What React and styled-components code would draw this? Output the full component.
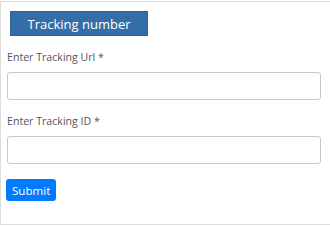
import React from "react";
import styled, { createGlobalStyle } from "styled-components";

const Global = createGlobalStyle`
  body {
    margin: 0;
    background: #fff;
    font-family: "Open Sans", "Liberation Sans", sans-serif;
  }
`;

const Panel = styled.div`
  margin-top: 1px;
  width: 100%;
  height: 224px;
  border: 1px solid #dcdcdc;
  border-right: none;
  padding: 9px 0 0 6px;
  box-sizing: border-box;
`;

const Heading = styled.div`
  margin-left: 3px;
  width: 138px;
  height: 25px;
  background: #336ea7;
  border: 1px solid #2d6398;
  box-sizing: border-box;
  color: #fff;
  font-size: 13px;
  display: flex;
  align-items: center;
  justify-content: center;
`;

const Form = styled.form`
  display: flex;
  flex-direction: column;
  width: 314px;
  margin-top: 14px;
`;

const Label = styled.label`
  font-size: 10.6px;
  color: #555;
  line-height: 15px;
  margin-bottom: 7px;
`;

const Input = styled.input`
  height: 28px;
  border: 1px solid #c8c8c8;
  border-radius: 3px;
  box-sizing: border-box;
  margin-bottom: ${(p) => p.$gap || 0}px;
`;

const Submit = styled.button`
  align-self: flex-start;
  margin-top: 15px;
  margin-left: -1px;
  height: 22px;
  padding: 0 6px;
  background: #007bff;
  color: #fff;
  border: none;
  border-radius: 3px;
  font-family: inherit;
  font-size: 11.6px;
`;

export default function App() {
  return (
    <>
      <Global />
      <Panel>
        <Heading>Tracking number</Heading>
        <Form onSubmit={(e) => e.preventDefault()}>
          <Label>Enter Tracking Url *</Label>
          <Input $gap={14} />
          <Label>Enter Tracking ID *</Label>
          <Input />
          <Submit type="submit">Submit</Submit>
        </Form>
      </Panel>
    </>
  );
}
